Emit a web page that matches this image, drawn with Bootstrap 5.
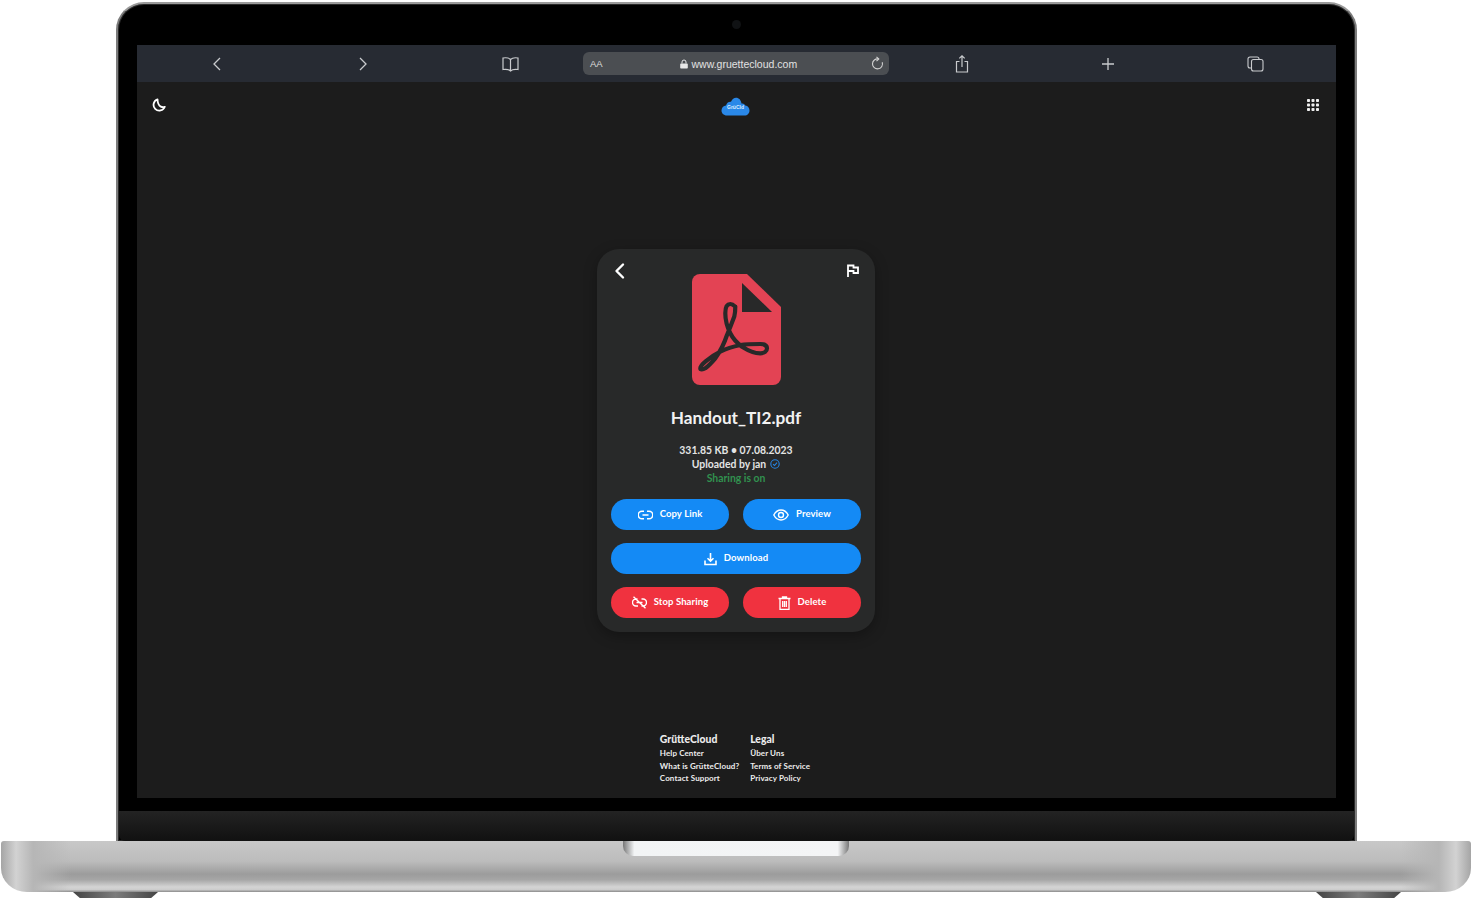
<!DOCTYPE html>
<html>
<head>
    <meta charset="utf-8" />
    <title>GrütteCloud</title>
    <link href="https://cdn.jsdelivr.net/npm/bootstrap@5.3.2/dist/css/bootstrap.min.css" rel="stylesheet">
    <style>
        body { background: #fff; font-family: "Lato", "Noto Sans", sans-serif; overflow: hidden; }

        /* laptop frame */
        .lid { width: 1241px; height: 839px; margin: 2px auto 0; background: #000; border: 2px solid #7c7c7c; border-top-color: #9a9a9a; border-bottom: 0; border-radius: 28px 28px 0 0; padding: 0 19px; box-shadow: inset 0 0 0 1px #2a2a2a; }
        .camera-row { height: 41px; }
        .camera { width: 9px; height: 9px; border-radius: 50%; background: #101214; }
        .screen { width: 1199px; height: 753px; background: #1c1c1c; }
        .chin { height: 30px; margin: 13px -18px 0; background: linear-gradient(#232323, #111); border-radius: 0 0 6px 6px; }
        .base { height: 51px; margin: 0 1px; border-radius: 3px 3px 26px 26px / 3px 3px 24px 24px; background:
            linear-gradient(90deg, #a5a5a5 0, #d2d2d2 15px, #b6b6b6 32px, rgba(182,182,182,0) 70px, rgba(182,182,182,0) calc(100% - 70px), #b6b6b6 calc(100% - 32px), #d2d2d2 calc(100% - 15px), #a5a5a5 100%),
            linear-gradient(#c8c8c8 0, #bcbcbc 40%, #9c9c9c 65%, #a6a6a6 76%, #d4d4d4 90%, #cecece 95%, #8a8a8a 100%); }
        .notch { width: 226px; height: 15px; background: linear-gradient(90deg, #777 0, #f2f4f5 5%, #f4f5f6 95%, #777 100%); border-radius: 0 0 10px 10px; }
        .feet { padding: 0 71px 0 73px; }
        .foot { width: 85px; height: 6px; background: linear-gradient(90deg, #444, #7c7c7c 50%, #444); clip-path: polygon(0 0, 100% 0, 92% 100%, 8% 100%); }

        /* safari toolbar */
        .safari { height: 37px; padding: 0 7px; background: #272b33; }
        .tool-slot { width: 146.5px; color: #c9cbce; }
        .book-ico { margin-left: 2px; }
        .plus-ico { margin-right: 1px; }
        .url-bar { width: 306px; height: 23px; padding: 0 5px 0 7px; background: #4b4e52; border-radius: 6px; color: #e2e2e2; font: 10.5px "Liberation Sans", sans-serif; }
        .url-aa { font-size: 9.5px; color: #dcdcdc; }
        .url-mid { padding-left: 4px; }

        /* page */
        .top-row { height: 24px; margin-top: 11px; padding: 0 16px 0 15px; }
        .logo-ico { margin-top: 3px; }
        .file-card { width: 278px; height: 383px; margin: 132px auto 0; padding: 14px; background: #282929; border-radius: 22px; box-shadow: 0 4px 14px rgba(0,0,0,.3); color: #f2f2f2; }
        .card-head { height: 111px; margin-top: 11px; }
        .head-ico { margin-top: -12px; }
        .file-name { font-size: 17.2px; font-weight: 700; line-height: 22px; margin: 22px 0 14px; }
        .file-meta { font-size: 10.4px; font-weight: 700; line-height: 14px; color: #e4e4e4; }
        .sharing { color: #31914f; }
        .actions { margin-top: 14px; gap: 13px; }
        .act-row { gap: 14px; }
        .act-btn { height: 31px; padding: 0; border: 0; border-radius: 16px; color: #fff; font-size: 9.5px; font-weight: 700; letter-spacing: .1px; gap: 7px; }
        .act-blue { background: #148af5; }
        .act-red { background: #f0323f; }
        .foot-links { margin-top: 100px; padding-right: 2px; gap: 11px; color: #ececec; font-size: 8px; font-weight: 700; letter-spacing: .1px; line-height: 12.5px; }
        .foot-links b { display: block; font-size: 10.4px; line-height: 15px; letter-spacing: 0; }
    </style>
</head>
<body>

    <div class="lid">
        <div class="camera-row d-flex align-items-center justify-content-center"><div class="camera"></div></div>

        <div class="screen">
            <!-- Safari bar -->
            <div class="safari d-flex align-items-center">
                <div class="tool-slot d-flex justify-content-center">
                    <svg width="12" height="16" viewBox="0 0 12 16" fill="none" stroke="currentColor" stroke-width="1.3"><path d="M9 2 3 8l6 6"/></svg>
                </div>
                <div class="tool-slot d-flex justify-content-center">
                    <svg width="12" height="16" viewBox="0 0 12 16" fill="none" stroke="currentColor" stroke-width="1.3"><path d="m3 2 6 6-6 6"/></svg>
                </div>
                <div class="tool-slot d-flex justify-content-center">
                    <svg class="book-ico" width="19" height="16" viewBox="0 0 19 16" fill="none" stroke="currentColor" stroke-width="1.2"><path d="M9.5 3.500C8 2 5 1.500 2 2v11.500c3-.4 6 0 7.500 1.500 1.500-1.500 4.500-1.900 7.500-1.500V2c-3-.5-6 0-7.500 1.500zm0 0V15"/></svg>
                </div>
                <div class="url-bar d-flex align-items-center">
                    <span class="url-aa">AA</span>
                    <span class="url-mid flex-grow-1 d-flex align-items-center justify-content-center gap-1">
                        <svg width="8" height="10" viewBox="0 0 8 10"><path fill="#e8e8e8" d="M1 4.500h6a.8.8 0 0 1 .8.8v3.400a.8.8 0 0 1-.8.8H1a.8.8 0 0 1-.8-.8V5.300A.8.800 0 0 1 1 4.500z"/><path fill="none" stroke="#e8e8e8" d="M2 4.500V3a2 2 0 0 1 4 0v1.500"/></svg>
                        <span>www.gruettecloud.com</span>
                    </span>
                    <svg width="14" height="15" viewBox="0 0 14 15" fill="none" stroke="#d4d4d4" stroke-width="1.1"><path d="M8.500 3a5 5 0 1 0 3.700 3.200"/><path d="M6.500.8 8.800 3 6.500 5.200"/></svg>
                </div>
                <div class="tool-slot d-flex justify-content-center">
                    <svg width="14" height="18" viewBox="0 0 14 18" fill="none" stroke="currentColor" stroke-width="1.2"><path d="M4.500 6.500H1.500v10.500h11V6.500H9.500M7 12V1M4.300 3.400 7 .8l2.700 2.600"/></svg>
                </div>
                <div class="tool-slot d-flex justify-content-center">
                    <svg class="plus-ico" width="14" height="14" viewBox="0 0 14 14" fill="none" stroke="currentColor" stroke-width="1.3"><path d="M7 1v12M1 7h12"/></svg>
                </div>
                <div class="tool-slot d-flex justify-content-center">
                    <svg width="17" height="16" viewBox="0 0 17 16" fill="none" stroke="currentColor" stroke-width="1.1"><rect x="4.500" y="3.500" width="11.500" height="11.500" rx="2"/><path d="M4.500 12H3a2 2 0 0 1-2-2V3a2 2 0 0 1 2-2h7a2 2 0 0 1 2 2v.5"/></svg>
                </div>
            </div>

            <!-- top of the page -->
            <div class="top-row d-flex align-items-center justify-content-between">
                <svg width="14" height="14" viewBox="0 0 14 14" fill="none" stroke="#fff" stroke-width="1.800"><path d="M5.500 1.300a5.800 5.800 0 1 0 7.300 7.500c-1.200.6-7 1.500-7.300-7.500z" stroke-linejoin="round"/></svg>
                <svg class="logo-ico" width="29" height="19" viewBox="0 0 29 19">
                    <path fill="#2a88e8" d="M6 18.500C2.500 18.500.5 16 .5 13.500c0-2.800 1.900-4.800 4.500-5.100C6 5.500 8 4.500 10 4.800 11.200 2 13 .8 15 .8c3 0 5 2.300 5.500 5.700 1.500-.4 3 .3 3.800 1.900 2.700.4 4.200 2.600 4.200 5 0 2.800-2 5.100-5 5.100z"/>
                    <text x="14.500" y="11.500" text-anchor="middle" font-family="Liberation Sans, sans-serif" font-size="5" font-weight="700" fill="#dcecff">GrüCld</text>
                </svg>
                <svg width="14" height="14" viewBox="0 0 14 14" fill="#f0f0f0"><rect x="1" y="1" width="3" height="3" rx=".8"/><rect x="5.500" y="1" width="3" height="3" rx=".8"/><rect x="10" y="1" width="3" height="3" rx=".8"/><rect x="1" y="5.500" width="3" height="3" rx=".8"/><rect x="5.500" y="5.500" width="3" height="3" rx=".8"/><rect x="10" y="5.500" width="3" height="3" rx=".8"/><rect x="1" y="10" width="3" height="3" rx=".8"/><rect x="5.500" y="10" width="3" height="3" rx=".8"/><rect x="10" y="10" width="3" height="3" rx=".8"/></svg>
            </div>

            <!-- Tarjeta del archivo -->
            <div class="file-card">
                <div class="card-head d-flex justify-content-between">
                    <svg class="head-ico" width="18" height="18" viewBox="0 0 18 18" fill="none" stroke="#fff" stroke-width="2.400" stroke-linecap="round" stroke-linejoin="round"><path d="M12 2.500 5.500 9l6.500 6.500"/></svg>
                    <svg width="89" height="111" viewBox="0 0 89 111">
                        <path fill="#e34354" d="M8 0h47l34 33v70a8 8 0 0 1-8 8H8a8 8 0 0 1-8-8V8a8 8 0 0 1 8-8z"/>
                        <path fill="#282929" d="m50 9 30 29H50z"/>
                        <path fill="none" stroke="#282929" stroke-width="4.200" stroke-linejoin="round" d="M38.300 30C35 30 33.300 34 33.300 39.300c0 7 2 14 5 20 3 6 7 10 11.700 13.400 6 3.800 13 6.600 18.300 6.600 4 0 6.700-2 6.700-5 0-3-3-4.300-6.700-4.300-7 0-14 .1-20 1-7 1.500-14 3.700-20 6.700-6 3-11 6.500-15 10-3 2.500-5 5-5 6.600 0 1.500 2.500 1.500 5 0 4-3 7-6.500 10-10 5-7 9-15 11.700-23.300 3-7 5.300-13 7.300-18.400 1-4 1-7 1-10C43.300 33 41.500 30 38.300 30z"/>
                    </svg>
                    <svg class="head-ico" width="18" height="18" viewBox="0 0 18 18" fill="none" stroke="#fff" stroke-width="1.800"><path d="M5 15V3.500h5.500v2h4.500v5.500h-4.500v-2H5"/></svg>
                </div>
                <div class="file-name text-center">Handout_TI2.pdf</div>
                <div class="file-meta text-center">
                    <div>331.85 KB • 07.08.2023</div>
                    <div class="d-flex align-items-center justify-content-center gap-1">Uploaded by jan
                        <svg width="10" height="10" viewBox="0 0 10 10" fill="none" stroke="#2684e4" stroke-width="1.100"><circle cx="5" cy="5" r="4.200"/><path d="m3 5.200 1.500 1.300L7 3.600"/></svg>
                    </div>
                    <div class="sharing">Sharing is on</div>
                </div>

                <div class="actions d-grid">
                    <div class="row g-0 flex-nowrap act-row">
                        <button class="btn act-btn act-blue col d-flex align-items-center justify-content-center">
                            <svg width="15" height="10" viewBox="0 0 15 10" fill="none" stroke="#fff" stroke-width="1.500"><path d="M6 1.200H4a3.800 3.800 0 0 0 0 7.600h2M9 1.200h2a3.800 3.800 0 0 1 0 7.600H9M4.500 5h6"/></svg>
                            Copy Link
                        </button>
                        <button class="btn act-btn act-blue col d-flex align-items-center justify-content-center">
                            <svg width="16" height="12" viewBox="0 0 16 12" fill="none" stroke="#fff" stroke-width="1.400"><path d="M.8 6C2.500 2.800 5 1 8 1s5.500 1.800 7.200 5C13.500 9.200 11 11 8 11S2.500 9.200.8 6z"/><circle cx="8" cy="6" r="2.500"/></svg>
                            Preview
                        </button>
                    </div>
                    <button class="btn act-btn act-blue d-flex align-items-center justify-content-center">
                        <svg width="13" height="14" viewBox="0 0 13 14" fill="none" stroke="#fff" stroke-width="1.600"><path d="M1 8.500v4h11v-4M6.500 1v8M3.500 6.200l3 3 3-3"/></svg>
                        Download
                    </button>
                    <div class="row g-0 flex-nowrap act-row">
                        <button class="btn act-btn act-red col d-flex align-items-center justify-content-center">
                            <svg width="15" height="13" viewBox="0 0 15 13" fill="none" stroke="#fff" stroke-width="1.400"><path d="M5.500 3H4a3.500 3.500 0 0 0 0 7h2M9.500 3H11a3.500 3.500 0 0 1 0 7H9.500M4.500 6.500h6M1.500.8l12 11.400"/></svg>
                            Stop Sharing
                        </button>
                        <button class="btn act-btn act-red col d-flex align-items-center justify-content-center">
                            <svg width="13" height="14" viewBox="0 0 13 14" fill="none" stroke="#fff" stroke-width="1.300"><path d="M.5 2.500h12M4.500 2.500V1h4v1.500M2 2.500v10.800h9V2.500M4.700 5v6M6.500 5v6M8.300 5v6"/></svg>
                            Delete
                        </button>
                    </div>
                </div>
            </div>

            <!-- Footer -->
            <div class="foot-links d-flex justify-content-center">
                <div><b>GrütteCloud</b><div>Help Center</div><div>What is GrütteCloud?</div><div>Contact Support</div></div>
                <div><b>Legal</b><div>Über Uns</div><div>Terms of Service</div><div>Privacy Policy</div></div>
            </div>
        </div>

        <div class="chin"></div>
    </div>

    <div class="base"><div class="notch mx-auto"></div></div>
    <div class="feet d-flex justify-content-between"><div class="foot"></div><div class="foot"></div></div>

    <script src="https://cdn.jsdelivr.net/npm/bootstrap@5.3.2/dist/js/bootstrap.bundle.min.js"></script>
</body>
</html>
